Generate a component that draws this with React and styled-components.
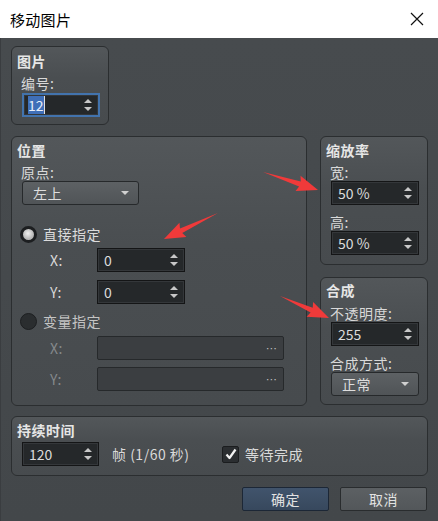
import React from 'react';
import styled, { createGlobalStyle } from 'styled-components';

const GlobalStyle = createGlobalStyle`
  html, body {
    margin: 0;
    padding: 0;
    background: #45494c;
  }
  body {
    font-family: "Noto Sans CJK SC", "Noto Sans", sans-serif;
    overflow: hidden;
  }
`

const Window = styled.div`
  position: relative;
  width: 438px;
  height: 521px;
  display: flex;
  flex-direction: column;
  background: #45494c;
`

const TitleBar = styled.div`
  height: 38px;
  flex: none;
  background: #fff;
  display: flex;
  align-items: center;
  justify-content: space-between;
  padding: 0 14px 0 10px;
  box-sizing: border-box;
  font-size: 15px;
  letter-spacing: 0.3px;
  color: #000;
`

const Body = styled.div`
  flex: 1;
  padding: 8px 10px 0 10px;
  border-left: 1px solid #3a3d40;
  background: linear-gradient(#474b4e, #43474a);
  color: #d9d9d9;
  font-size: 14px;
  letter-spacing: 0.5px;
  box-sizing: border-box;
`

const Group = styled.div`
  box-sizing: border-box;
  width: ${p => p.$w}px;
  height: ${p => p.$h}px;
  border: 1px solid #2b2e30;
  border-radius: 6px;
  background: linear-gradient(#53575a, #4a4e51 40%, #474b4e);
  padding: ${p => p.$pt || 5}px 0 0 5px;
`

const GroupTitle = styled.div`
  font-weight: bold;
  font-size: 14px;
  line-height: 18px;
  color: #e6e6e6;
`

const Label = styled.div`
  line-height: 18px;
  margin: ${p => p.$mt || 0}px 0 0 4px;
  color: ${p => (p.$dim ? '#85898c' : '#d9d9d9')};
`

const Row = styled.div`
  display: flex;
  gap: ${p => p.$gap || 13}px;
  margin-top: ${p => p.$mt || 0}px;
`

const Column = styled.div`
  display: flex;
  flex-direction: column;
  gap: 12px;
`

const SpinBox = styled.div`
  box-sizing: border-box;
  width: ${p => p.$w}px;
  height: ${p => p.$h || 24}px;
  margin: ${p => p.$mt || 0}px 0 0 ${p => (p.$ml === undefined ? 5 : p.$ml)}px;
  background: #25282a;
  border: ${p => (p.$focus ? '2px solid #4273ad' : '1px solid #141516')};
  box-shadow: inset 0 0 0 1px #34373a;
  display: flex;
  align-items: center;
  padding-left: ${p => (p.$focus ? 4 : 6)}px;
  font-size: 14px;
  letter-spacing: 0;
  color: #dcdcdc;
  position: relative;
`

const Selected = styled.span`
  background: #3f6fb8;
  color: #e8eef8;
  line-height: 18px;
  border-right: 1px solid #e0e0e0;
`

const Arrows = styled.div`
  position: absolute;
  right: 6px;
  top: 0;
  bottom: 0;
  display: flex;
  flex-direction: column;
  justify-content: center;
  gap: 4px;
`

const Tri = styled.div`
  width: 0;
  height: 0;
  border-left: 4px solid transparent;
  border-right: 4px solid transparent;
  ${p => (p.$up ? 'border-bottom: 4px solid #c8c8c8;' : 'border-top: 4px solid #c8c8c8;')}
`

const Combo = styled.div`
  box-sizing: border-box;
  width: ${p => p.$w}px;
  height: 24px;
  margin: 0 0 0 5px;
  border: 1px solid #26292b;
  border-radius: 3px;
  background: linear-gradient(#5d6164, #505457);
  display: flex;
  align-items: center;
  justify-content: space-between;
  padding: 0 9px 0 10px;
  color: #dedede;
`

const DropTri = styled.div`
  width: 0;
  height: 0;
  border-left: 4px solid transparent;
  border-right: 4px solid transparent;
  border-top: 4px solid #d0d0d0;
`

const RadioRow = styled.div`
  display: flex;
  align-items: center;
  gap: 6px;
  height: 20px;
  margin: ${p => p.$mt}px 0 0 3px;
  color: ${p => (p.$dim ? '#c4c4c4' : '#dcdcdc')};
`

const Radio = styled.div`
  box-sizing: border-box;
  width: 17px;
  height: 17px;
  border-radius: 50%;
  background: ${p => (p.$on ? 'radial-gradient(circle at 45% 40%, #f0f0f0, #b8b8b8 60%)' : '#2a2d2f')};
  border: ${p => (p.$on ? '3px solid #1c1e20' : '1px solid #1c1e20')};
`

const CoordRow = styled.div`
  display: flex;
  align-items: center;
  margin-top: ${p => p.$mt}px;
`

const CoordLabel = styled.div`
  width: 47px;
  padding-left: 33px;
  color: ${p => (p.$dim ? '#85898c' : '#d9d9d9')};
`

const VarField = styled.div`
  box-sizing: border-box;
  width: 187px;
  height: 24px;
  border: 1px solid #26292b;
  border-radius: 2px;
  background: #3b3e41;
  display: flex;
  align-items: center;
  justify-content: flex-end;
  padding-right: 6px;
  color: #c0c0c0;
  font-family: "DejaVu Sans", sans-serif;
  font-size: 11px;
  letter-spacing: 0;
`

const DurationRow = styled.div`
  display: flex;
  align-items: center;
  margin-top: 3px;
`

const FrameText = styled.div`
  margin-left: 13px;
  width: 110px;
`

const Check = styled.div`
  box-sizing: border-box;
  width: 17px;
  height: 17px;
  border: 1px solid #1b1d1f;
  border-radius: 2px;
  background: #2b2e31;
  display: flex;
  align-items: center;
  justify-content: center;
  margin-right: 6px;
`

const ButtonRow = styled.div`
  display: flex;
  justify-content: flex-end;
  gap: 11px;
  margin-top: 11px;
  padding-right: 1px;
`

const Button = styled.div`
  box-sizing: border-box;
  width: 87px;
  height: 24px;
  border-radius: 2px;
  border: 1px solid ${p => (p.$primary ? '#1c2736' : '#292c2e')};
  background: ${p => (p.$primary ? 'linear-gradient(#41546c, #37485d)' : 'linear-gradient(#5c6063, #53575a)')};
  color: #e2e2e2;
  display: flex;
  align-items: center;
  justify-content: center;
  font-size: 14px;
`

const Overlay = styled.svg`
  position: absolute;
  left: 0;
  top: 0;
  pointer-events: none;
`

function Spin({ value, w, focus, mt, ml }) {
  return (
    <SpinBox $w={w} $focus={focus} $mt={mt} $ml={ml}>
      {focus ? <Selected>{value}</Selected> : value}
      <Arrows>
        <Tri $up />
        <Tri />
      </Arrows>
    </SpinBox>
  )
}

function arrowPoints(x1, y1, x2, y2) {
  const dx = x2 - x1
  const dy = y2 - y1
  const len = Math.hypot(dx, dy)
  const ux = dx / len
  const uy = dy / len
  const nx = -uy
  const ny = ux
  const head = 19
  const bx = x2 - ux * head
  const by = y2 - uy * head
  const pts = [
    [x1, y1],
    [bx + nx * 2.6, by + ny * 2.6],
    [bx - ux * 2 + nx * 8, by - uy * 2 + ny * 8],
    [x2, y2],
    [bx - ux * 2 - nx * 8, by - uy * 2 - ny * 8],
    [bx - nx * 2.6, by - ny * 2.6],
  ]
  return pts.map(p => p.join(',')).join(' ')
}

export default function App() {
  return (
    <Window>
      <GlobalStyle />
      <TitleBar>
        <span>移动图片</span>
        <svg width="14" height="14" viewBox="0 0 14 14">
          <path d="M1 1 L13 13 M13 1 L1 13" stroke="#111" strokeWidth="1.2" />
        </svg>
      </TitleBar>
      <Body>
        <Group $w={98} $h={79}>
          <GroupTitle>图片</GroupTitle>
          <Label $mt={4}>编号:</Label>
          <Spin value="12" w={78} focus mt={1} />
        </Group>

        <Row $mt={11}>
          <Group $w={297} $h={270} $pt={4}>
            <GroupTitle>位置</GroupTitle>
            <Label $mt={4}>原点:</Label>
            <Combo $w={117}>
              左上
              <DropTri />
            </Combo>
            <RadioRow $mt={19}>
              <Radio $on />
              直接指定
            </RadioRow>
            <CoordRow $mt={4}>
              <CoordLabel>X:</CoordLabel>
              <Spin value="0" w={88} ml={0} />
            </CoordRow>
            <CoordRow $mt={8}>
              <CoordLabel>Y:</CoordLabel>
              <Spin value="0" w={88} ml={0} />
            </CoordRow>
            <RadioRow $mt={7} $dim>
              <Radio />
              变量指定
            </RadioRow>
            <CoordRow $mt={5}>
              <CoordLabel $dim>X:</CoordLabel>
              <VarField>⋯</VarField>
            </CoordRow>
            <CoordRow $mt={7}>
              <CoordLabel $dim>Y:</CoordLabel>
              <VarField>⋯</VarField>
            </CoordRow>
          </Group>

          <Column>
            <Group $w={108} $h={129} $pt={4}>
              <GroupTitle>缩放率</GroupTitle>
              <Label $mt={4}>宽:</Label>
              <Spin value="50 %" w={88} />
              <Label $mt={8}>高:</Label>
              <Spin value="50 %" w={88} />
            </Group>
            <Group $w={108} $h={128} $pt={3}>
              <GroupTitle>合成</GroupTitle>
              <Label $mt={5}>不透明度:</Label>
              <Spin value="255" w={88} />
              <Label $mt={8}>合成方式:</Label>
              <Combo $w={88}>
                正常
                <DropTri />
              </Combo>
            </Group>
          </Column>
        </Row>

        <Row $mt={10}>
          <Group $w={418} $h={60} $pt={4}>
            <GroupTitle>持续时间</GroupTitle>
            <DurationRow>
              <Spin value="120" w={77} />
              <FrameText>帧 (1/60 秒)</FrameText>
              <Check>
                <svg width="12" height="12" viewBox="0 0 12 12">
                  <path d="M1.5 6.5 L4.5 10 L10.5 1.5" fill="none" stroke="#f2f2f2" strokeWidth="2.2" strokeLinejoin="round" />
                </svg>
              </Check>
              等待完成
            </DurationRow>
          </Group>
        </Row>

        <ButtonRow>
          <Button $primary>确定</Button>
          <Button>取消</Button>
        </ButtonRow>
      </Body>

      <Overlay width="438" height="521" viewBox="0 0 438 521">
        <polygon points={arrowPoints(263, 172, 318, 190)} fill="#f03a3a" />
        <polygon points={arrowPoints(218, 213, 164, 239)} fill="#f03a3a" />
        <polygon points={arrowPoints(280, 296, 329, 318)} fill="#f03a3a" />
      </Overlay>
    </Window>
  )
}
